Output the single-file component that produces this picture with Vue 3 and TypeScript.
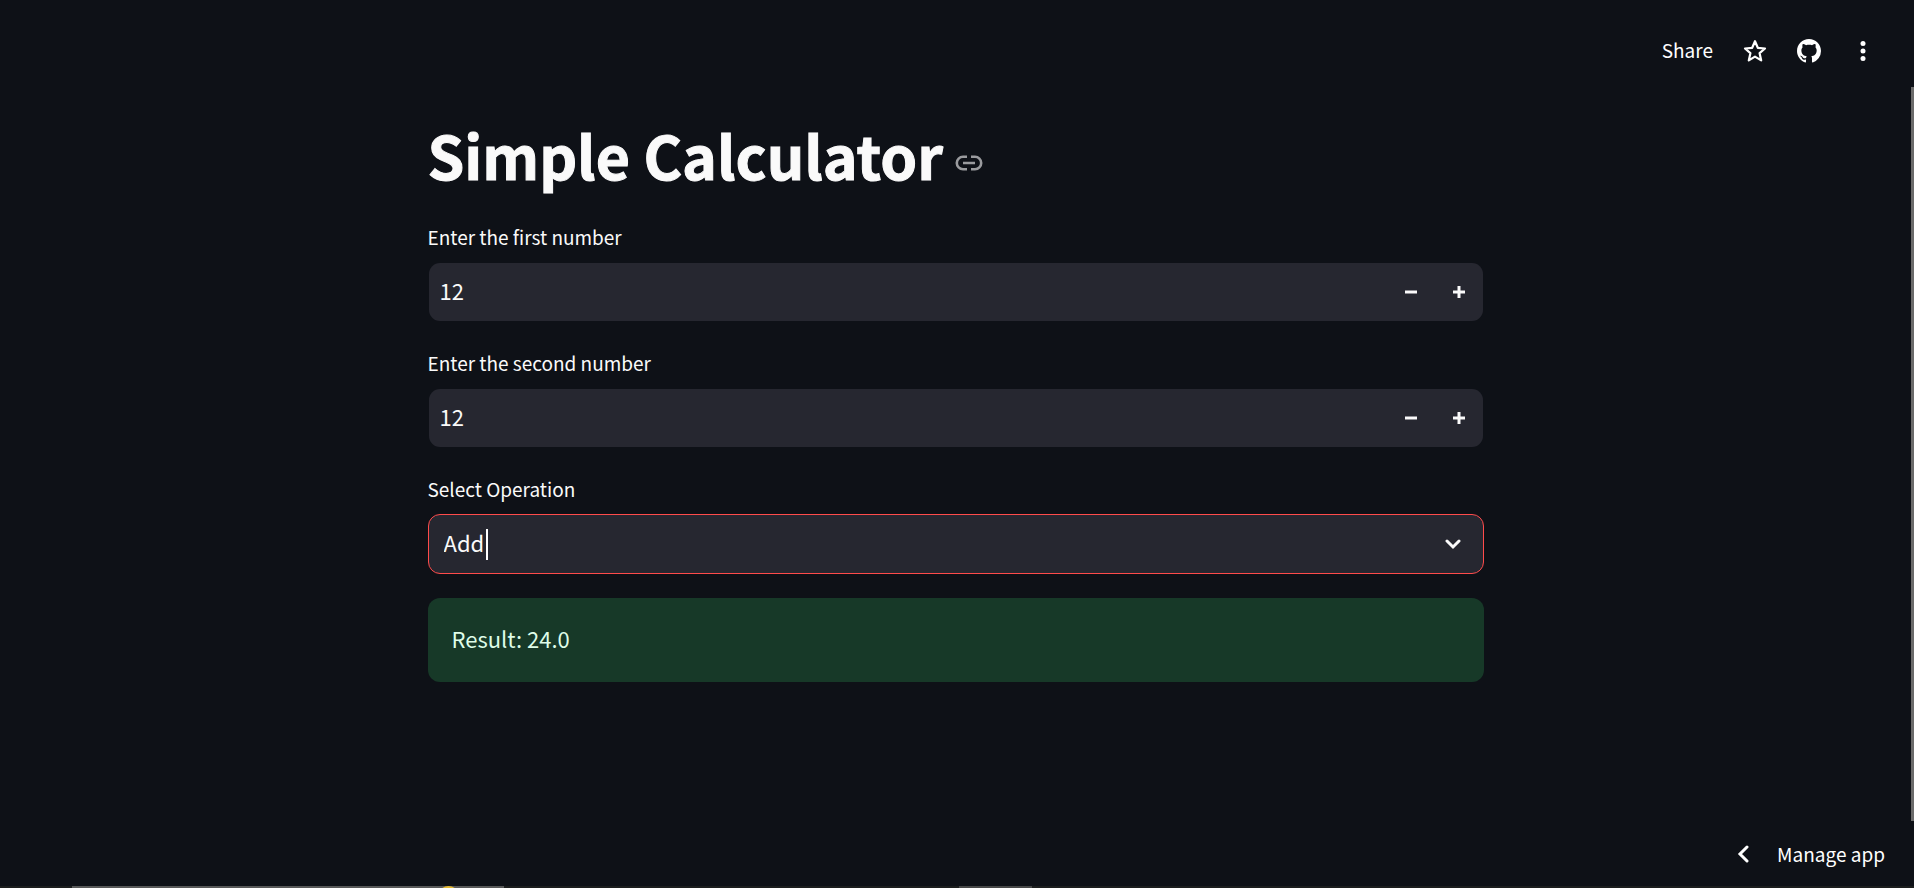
<script setup lang="ts">
import { computed, ref } from 'vue'

type Operation = 'Add' | 'Subtract' | 'Multiply' | 'Divide'

interface NumberField {
  id: string
  label: string
  value: number
}

const operations: Operation[] = ['Add', 'Subtract', 'Multiply', 'Divide']
const operation = ref<Operation>('Add')
const fields = ref<NumberField[]>([
  { id: 'first', label: 'Enter the first number', value: 12 },
  { id: 'second', label: 'Enter the second number', value: 12 },
])

const result = computed<string>(() => {
  const [a, b] = fields.value.map((field) => Number(field.value))
  switch (operation.value) {
    case 'Subtract':
      return (a - b).toFixed(1)
    case 'Multiply':
      return (a * b).toFixed(1)
    case 'Divide':
      return b === 0 ? 'undefined' : (a / b).toFixed(1)
    default:
      return (a + b).toFixed(1)
  }
})
</script>

<template>
  <div class="app">
    <header class="toolbar">
      <button type="button" class="tool share">Share</button>
      <button type="button" class="tool icon" aria-label="Add to favorites">
        <svg width="24" height="24" viewBox="0 0 24 24">
          <path
            d="M12 2.2 14.8 8.8 22 9.5 16.6 14.2 18.2 21.4 12 17.6 5.8 21.4 7.4 14.2 2 9.5 9.2 8.8Z"
            fill="none" stroke="currentColor" stroke-width="2.2" stroke-linejoin="round"
          />
        </svg>
      </button>
      <a class="tool icon" href="#source" aria-label="View source on GitHub">
        <svg width="24" height="24" viewBox="0 0 16 16">
          <path
            fill="currentColor"
            d="M8 0C3.58 0 0 3.58 0 8c0 3.54 2.29 6.53 5.47 7.59.4.07.55-.17.55-.38 0-.19-.01-.82-.01-1.49-2.01.37-2.53-.49-2.69-.94-.09-.23-.48-.94-.82-1.13-.28-.15-.68-.52-.01-.53.63-.01 1.08.58 1.23.82.72 1.21 1.87.87 2.33.66.07-.52.28-.87.51-1.07-1.78-.2-3.64-.89-3.64-3.95 0-.87.31-1.59.82-2.15-.08-.2-.36-1.02.08-2.12 0 0 .67-.21 2.2.82.64-.18 1.32-.27 2-.27s1.36.09 2 .27c1.53-1.04 2.2-.82 2.2-.82.44 1.1.16 1.92.08 2.12.51.56.82 1.27.82 2.15 0 3.07-1.87 3.75-3.65 3.95.29.25.54.73.54 1.48 0 1.07-.01 1.93-.01 2.2 0 .21.15.46.55.38A8.01 8.01 0 0 0 16 8c0-4.42-3.58-8-8-8Z"
          />
        </svg>
      </a>
      <button type="button" class="tool icon" aria-label="Main menu">
        <svg width="24" height="24" viewBox="0 0 24 24" fill="currentColor">
          <circle cx="12" cy="4.5" r="2.5" />
          <circle cx="12" cy="12" r="2.5" />
          <circle cx="12" cy="19.5" r="2.5" />
        </svg>
      </button>
    </header>

    <div class="page">
      <main class="content">
        <h1 id="simple-calculator" class="title">
          <span>Simple Calculator</span>
          <a class="anchor" href="#simple-calculator" aria-label="Link to heading">
            <svg width="28" height="18" viewBox="0 0 28 18" fill="none" stroke="currentColor" stroke-width="2.6">
              <path d="M12 2.8H8a6.2 6.2 0 0 0 0 12.4h4M16 2.8h4a6.2 6.2 0 0 1 0 12.4h-4M8 9h12" />
            </svg>
          </a>
        </h1>

        <div v-for="field in fields" :key="field.id" class="field">
          <label :for="field.id">{{ field.label }}</label>
          <div class="control">
            <input :id="field.id" v-model="field.value" type="number" />
            <button type="button" class="step" :aria-label="`Decrease: ${field.label}`" @click="field.value--">
              <svg width="12" height="12" viewBox="0 0 12 12"><path d="M0 6h12" stroke="currentColor" stroke-width="3" /></svg>
            </button>
            <button type="button" class="step" :aria-label="`Increase: ${field.label}`" @click="field.value++">
              <svg width="12" height="12" viewBox="0 0 12 12"><path d="M0 6h12M6 0v12" stroke="currentColor" stroke-width="3" /></svg>
            </button>
          </div>
        </div>

        <div class="field">
          <label for="operation">Select Operation</label>
          <div class="control focused">
            <select id="operation" v-model="operation">
              <option v-for="item in operations" :key="item" :value="item">{{ item }}</option>
            </select>
            <span class="caret" aria-hidden="true"></span>
            <svg class="chevron" width="16" height="12" viewBox="0 0 16 12" aria-hidden="true">
              <path d="M2 3l6 6 6-6" fill="none" stroke="currentColor" stroke-width="3" stroke-linecap="round" />
            </svg>
          </div>
        </div>

        <output class="result" for="first second operation">Result: {{ result }}</output>
      </main>
    </div>

    <footer class="footer">
      <button type="button" class="manage">
        <svg width="12" height="18" viewBox="0 0 12 18" aria-hidden="true">
          <path d="M10 2 3 9l7 7" fill="none" stroke="currentColor" stroke-width="3" stroke-linecap="round" />
        </svg>
        <span>Manage app</span>
      </button>
    </footer>

    <div class="scrollbar" aria-hidden="true"></div>
    <div class="taskbar" aria-hidden="true">
      <span class="window"></span>
      <span class="badge"></span>
      <span class="window small"></span>
    </div>
  </div>
</template>

<style>
body {
  margin: 0;
  background: #0e1117;
}
</style>

<style scoped>
.app {
  position: relative;
  display: flex;
  flex-direction: column;
  box-sizing: border-box;
  min-height: 100vh;
  overflow: hidden;
  color: #fafafa;
  background: #0e1117;
  font-family: "Noto Sans CJK SC", "Noto Sans", sans-serif;
  font-size: 22px;
}

button,
input,
select {
  margin: 0;
  padding: 0;
  border: 0;
  background: transparent;
  color: inherit;
  font: inherit;
  outline: none;
}

.toolbar {
  display: flex;
  justify-content: flex-end;
  align-items: center;
  gap: 30px;
  height: 102px;
  padding-right: 39px;
}

.tool {
  display: flex;
  color: #ffffff;
  font-size: 19px;
  line-height: 30px;
}

.share {
  padding-bottom: 2px;
}

.icon svg {
  display: block;
}

/* The right padding keeps the column clear of the scrollbar. */
.page {
  flex: 1;
  padding: 14px 3px 0 0;
}

.content {
  max-width: 1056px;
  margin: 0 auto;
}

.title {
  display: flex;
  align-items: center;
  gap: 12px;
  margin: 0 0 26px;
  font-size: 59px;
  font-weight: 700;
  line-height: 78px;
  -webkit-text-stroke: 1px currentColor;
}

.anchor {
  display: flex;
  padding-top: 16px;
  color: #9a9b9e;
}

.field {
  display: flex;
  flex-direction: column;
  margin-bottom: 24px;
}

.field label {
  margin-bottom: 8px;
  font-size: 19px;
  line-height: 34px;
}

.control {
  position: relative;
  display: flex;
  align-items: center;
  height: 58px;
  border: 1px solid transparent;
  border-radius: 12px;
  background: #262730;
  background-clip: padding-box;
}

.focused {
  border-color: #ff4b4b;
  background-clip: border-box;
}

.control input,
.control select {
  box-sizing: border-box;
  flex: 1;
  min-width: 0;
  height: 100%;
  padding-bottom: 4px;
}

.control input {
  padding-left: 11px;
  appearance: textfield;
}

.control input::-webkit-inner-spin-button {
  appearance: none;
}

.control select {
  padding-left: 15px;
  appearance: none;
}

.control option {
  background: #262730;
}

.step {
  display: flex;
  justify-content: center;
  align-items: center;
  width: 48px;
  height: 100%;
}

.caret {
  position: absolute;
  left: 57px;
  width: 2px;
  height: 31px;
  background: #ffffff;
}

.chevron {
  position: absolute;
  right: 22px;
  pointer-events: none;
}

.result {
  display: block;
  padding: 22px 24px 26px;
  border-radius: 12px;
  background: #173928;
  color: #dffde9;
  line-height: 36px;
}

.footer {
  display: flex;
  justify-content: flex-end;
  padding: 0 29px 16px;
}

.manage {
  display: flex;
  align-items: center;
  gap: 28px;
  color: #ffffff;
  font-size: 19px;
  line-height: 36px;
}

.scrollbar {
  position: absolute;
  top: 87px;
  right: 0;
  bottom: 67px;
  width: 3px;
  background: #6b6b6b;
}

.taskbar {
  position: absolute;
  right: 0;
  bottom: 0;
  left: 0;
  height: 2px;
  overflow: hidden;
  background: #1c1e1e;
}

.window {
  position: absolute;
  left: 72px;
  width: 432px;
  height: 2px;
  background: #585959;
}

.small {
  left: 959px;
  width: 73px;
  background: #474848;
}

.badge {
  position: absolute;
  left: 438px;
  width: 21px;
  height: 21px;
  border-radius: 50%;
  background: #e5b92f;
}
</style>
